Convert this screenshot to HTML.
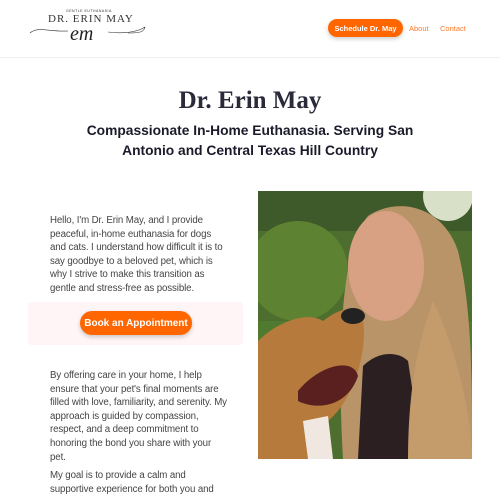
<!DOCTYPE html>
<html><head><style>
body{margin:0;width:500px;height:500px;overflow:hidden;background:#fff;font-family:"Liberation Sans",sans-serif;position:relative}
.hdr{position:absolute;left:0;top:0;width:500px;height:57px;border-bottom:1px solid #f0f0f0}
.abs{position:absolute}
.btn{background:#ff6600;color:#fff;font-weight:bold;border-radius:12px;box-shadow:0 2px 4px rgba(0,0,0,.2);display:flex;align-items:center;justify-content:center}
.txt{font-size:9.7px;line-height:13.6px;color:#444;white-space:nowrap;letter-spacing:-0.1px}
</style></head><body>
<div class="hdr"></div>
<div class="abs" style="left:66px;top:9px;font-size:3.5px;letter-spacing:.5px;color:#333">GENTLE EUTHANASIA</div>
<div class="abs" style="left:48px;top:13px;font-family:'Liberation Serif',serif;font-size:11px;letter-spacing:1px;color:#333">DR. ERIN MAY</div>
<svg class="abs" style="left:28px;top:24px" width="120" height="20"><path d="M2 9 C10 2,20 8,40 7 M80 8 C95 10,110 8,117 3 M117 3 C116 8,112 9,100 9" stroke="#333" fill="none" stroke-width=".6"/><text x="42" y="16" font-family="Liberation Serif" font-style="italic" font-size="20" fill="#222">em</text></svg>
<div class="abs btn" style="left:328px;top:19px;width:75px;height:18px;font-size:7.5px;border-radius:9px">Schedule Dr. May</div>
<div class="abs" style="left:409px;top:24px;font-size:7.5px;color:#ff7a2a">About</div>
<div class="abs" style="left:440px;top:24px;font-size:7.5px;color:#ff7a2a">Contact</div>
<div class="abs" style="left:0;width:500px;top:87px;text-align:center;font-family:'Liberation Serif',serif;font-weight:bold;font-size:25px;color:#2a2a3a">Dr. Erin May</div>
<div class="abs" style="left:70px;width:360px;top:121px;text-align:center;font-weight:bold;font-size:13.8px;line-height:20px;color:#1a1a2a">Compassionate In-Home Euthanasia. Serving San<br>Antonio and Central Texas Hill Country</div>
<div class="abs txt" style="left:50px;top:214px">Hello, I'm Dr. Erin May, and I provide<br>peaceful, in-home euthanasia for dogs<br>and cats. I understand how difficult it is to<br>say goodbye to a beloved pet, which is<br>why I strive to make this transition as<br>gentle and stress-free as possible.</div>
<div class="abs" style="left:28px;top:302px;width:215px;height:43px;background:#fff5f6;border-radius:3px"></div>
<div class="abs btn" style="left:80px;top:311px;width:112px;height:24px;font-size:10px">Book an Appointment</div>
<div class="abs txt" style="left:50px;top:369px">By offering care in your home, I help<br>ensure that your pet's final moments are<br>filled with love, familiarity, and serenity. My<br>approach is guided by compassion,<br>respect, and a deep commitment to<br>honoring the bond you share with your<br>pet.</div>
<div class="abs txt" style="left:50px;top:469px">My goal is to provide a calm and<br>supportive experience for both you and</div>
<svg class="abs" style="left:258px;top:191px" width="214" height="268" viewBox="0 0 214 268">
<rect width="214" height="268" fill="#4d6e2e"/>
<rect width="214" height="40" fill="#3e5a2a"/>
<ellipse cx="40" cy="80" rx="50" ry="50" fill="#5c8232"/>
<rect x="0" y="130" width="214" height="40" fill="#4f7a30"/>
<circle cx="190" cy="5" r="25" fill="#d8e0c8"/>
<path d="M85 268 C80 180,80 60,110 25 C140 5,185 15,200 60 C215 120,214 200,214 268Z" fill="#b89468"/>
<ellipse cx="128" cy="75" rx="38" ry="55" fill="#d9a184"/>
<path d="M100 268 L105 175 C120 160,140 160,150 170 L165 268Z" fill="#2b1f22"/>
<path d="M150 268 C150 200,160 150,175 110 C195 150,214 220,214 268Z" fill="#c49c6c"/>
<path d="M0 150 C20 130,50 120,65 130 C80 118,100 110,105 130 C110 160,95 210,70 230 L60 268 L0 268Z" fill="#b57a3c"/>
<path d="M40 200 C60 175,95 165,100 185 C90 215,60 220,40 210Z" fill="#5a2020"/>
<path d="M45 230 L50 268 L75 268 L70 225Z" fill="#f0e8e0"/>
<ellipse cx="95" cy="125" rx="12" ry="8" fill="#222"/>
</svg>
</body></html>
